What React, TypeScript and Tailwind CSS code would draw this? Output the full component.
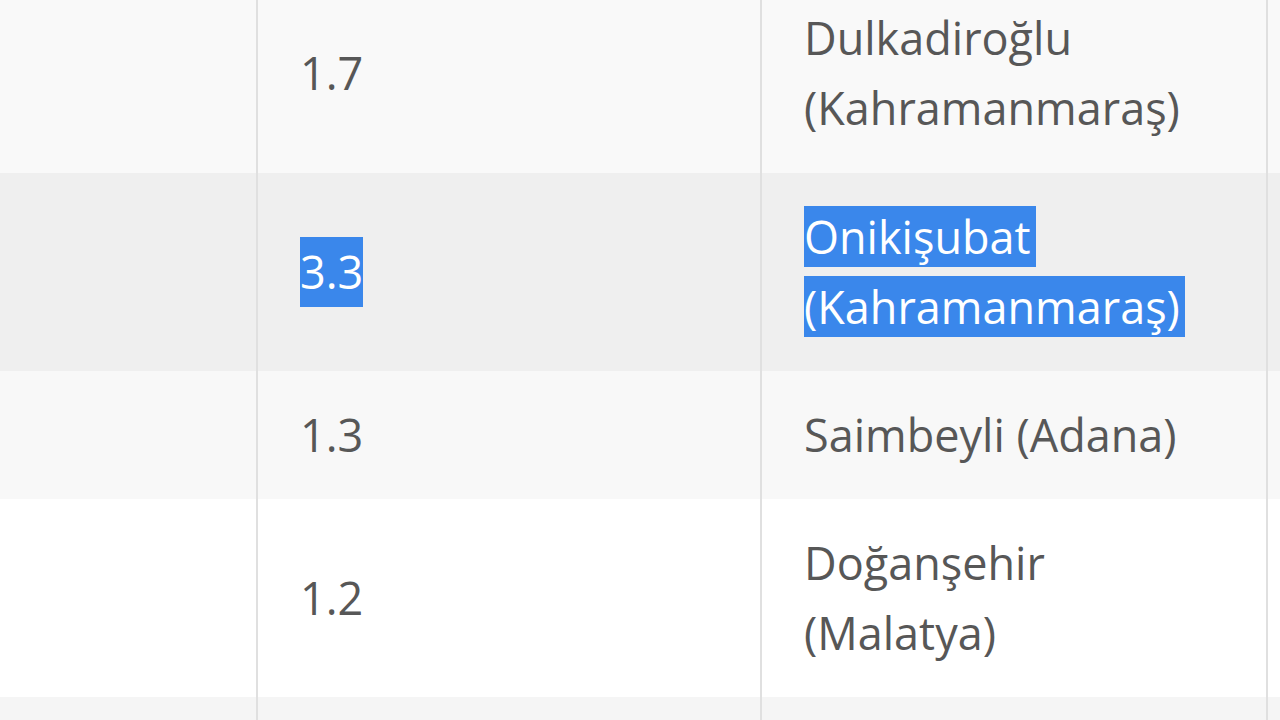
const rows = [
  { bg: "bg-[#f9f9f9]", value: "1.7", lines: ["Dulkadiroğlu", "(Kahramanmaraş)"], first: true },
  { bg: "bg-[#efefef]", value: "3.3", lines: ["Onikişubat", "(Kahramanmaraş)"], selected: true },
  { bg: "bg-[#f8f8f8]", value: "1.3", lines: ["Saimbeyli (Adana)"] },
  { bg: "bg-white", value: "1.2", lines: ["Doğanşehir", "(Malatya)"] },
  { bg: "bg-[#f5f5f5]", value: "", lines: [""] },
];

function Row({
  bg,
  value,
  lines,
  first,
  selected,
}: {
  bg: string;
  value: string;
  lines: string[];
  first?: boolean;
  selected?: boolean;
}) {
  const pad = first ? "pt-[3px] pb-[30px]" : "py-[29px]";
  return (
    <div className={`grid grid-cols-[256px_504px_506px_1fr] ${bg}`}>
      <div />
      <div className={`border-l-2 border-[#e0e0e0] pl-[42px] ${pad} flex items-center`}>
        {selected ? (
          <span className="bg-[#3a87eb] text-white">{value}</span>
        ) : (
          <span>{value}</span>
        )}
      </div>
      <div className={`border-l-2 border-[#e0e0e0] pl-[42px] ${pad}`}>
        {lines.map((l, i) =>
          selected ? (
            <div key={i}>
              <span className="bg-[#3a87eb] text-white pr-[5px]">{l}</span>
            </div>
          ) : (
            <div key={i} className="min-h-[70px]">{l}</div>
          )
        )}
      </div>
      <div className="border-l-2 border-[#e0e0e0]" />
    </div>
  );
}

export default function App() {
  return (
    <div
      className="w-[1280px] h-[720px] overflow-hidden bg-white text-[#575757] text-[45px] leading-[70px]"
      style={{ fontFamily: '"Open Sans", "Noto Sans", sans-serif' }}
    >
      {rows.map((r, i) => (
        <Row key={i} {...r} />
      ))}
    </div>
  );
}
